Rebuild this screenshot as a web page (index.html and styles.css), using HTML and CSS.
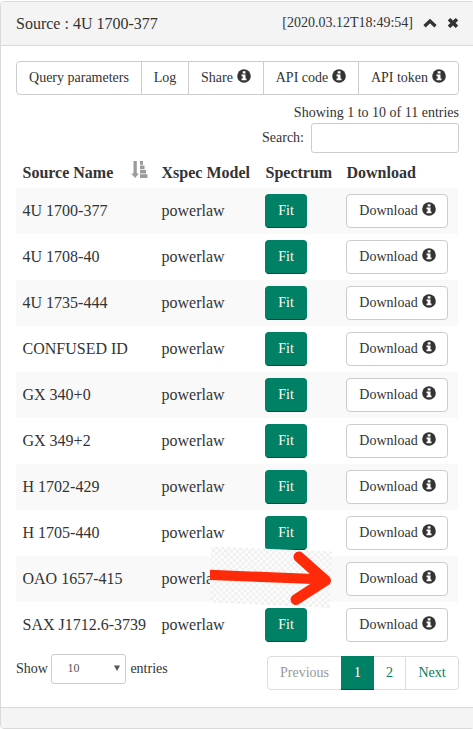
FILE: index.html
```
<!DOCTYPE html>
<html lang="en">
<head>
<meta charset="utf-8">
<title>Source : 4U 1700-377</title>
<link rel="stylesheet" href="styles.css">
</head>
<body>
<svg width="0" height="0" class="defs">
  <symbol id="info" viewBox="0 0 14 14"><circle cx="7" cy="7" r="6.8" fill="#333"/><path d="M5.700 2.200h2.800v2.200H5.700zM4.500 5.600h4v4h1v1.700H4.500V9.600h1.200V7.200H4.500z" fill="#fff"/></symbol>
</svg>
<section class="panel">
  <header class="panel-head">
    <span class="title">Source : 4U 1700-377</span>
    <span class="stamp">[2020.03.12T18:49:54]</span>
    <svg class="chev" width="14" height="10" viewBox="0 0 14 10"><path d="M1.500 8.200 7 3l5.500 5.200" fill="none" stroke="#333" stroke-width="3.300"/></svg>
    <svg class="close" width="11" height="10" viewBox="0 0 11 10"><path d="M1 1.200l8 7.600M9 1.200l-8 7.600" stroke="#333" stroke-width="3.500"/></svg>
  </header>
  <div class="panel-body">
    <div class="group">
      <button class="btn w-query">Query parameters</button>
      <button class="btn w-log">Log</button>
      <button class="btn w-share">Share <svg class="info"><use href="#info"/></svg></button>
      <button class="btn w-code">API code <svg class="info"><use href="#info"/></svg></button>
      <button class="btn w-token">API token <svg class="info"><use href="#info"/></svg></button>
    </div>
    <div class="showing">Showing 1 to 10 of 11 entries</div>
    <label class="search">Search:<input type="text"></label>
    <table>
      <colgroup><col class="c1"><col class="c2"><col class="c3"><col class="c4"></colgroup>
      <thead>
        <tr>
          <th><div class="sorted">Source Name
            <svg width="17" height="17" viewBox="0 0 17 17"><path d="M2.500 0h3.300v12.500h2.200L4.100 17 .2 12.500h2.300zM9 0h3v3.800H9zM9 4.500h4.500v3.800H9zM9 9h6v3.500H9zM9 13.200h7.500V17H9z" fill="#9b9b9b"/></svg></div></th>
          <th>Xspec Model</th><th>Spectrum</th><th>Download</th>
        </tr>
      </thead>
      <tbody>
        <tr><td>4U 1700-377</td><td>powerlaw</td><td><button class="btn fit">Fit</button></td><td><button class="btn dl">Download <svg class="info"><use href="#info"/></svg></button></td></tr>
        <tr><td>4U 1708-40</td><td>powerlaw</td><td><button class="btn fit">Fit</button></td><td><button class="btn dl">Download <svg class="info"><use href="#info"/></svg></button></td></tr>
        <tr><td>4U 1735-444</td><td>powerlaw</td><td><button class="btn fit">Fit</button></td><td><button class="btn dl">Download <svg class="info"><use href="#info"/></svg></button></td></tr>
        <tr><td>CONFUSED ID</td><td>powerlaw</td><td><button class="btn fit">Fit</button></td><td><button class="btn dl">Download <svg class="info"><use href="#info"/></svg></button></td></tr>
        <tr><td>GX 340+0</td><td>powerlaw</td><td><button class="btn fit">Fit</button></td><td><button class="btn dl">Download <svg class="info"><use href="#info"/></svg></button></td></tr>
        <tr><td>GX 349+2</td><td>powerlaw</td><td><button class="btn fit">Fit</button></td><td><button class="btn dl">Download <svg class="info"><use href="#info"/></svg></button></td></tr>
        <tr><td>H 1702-429</td><td>powerlaw</td><td><button class="btn fit">Fit</button></td><td><button class="btn dl">Download <svg class="info"><use href="#info"/></svg></button></td></tr>
        <tr><td>H 1705-440</td><td>powerlaw</td><td><button class="btn fit">Fit</button></td><td><button class="btn dl">Download <svg class="info"><use href="#info"/></svg></button></td></tr>
        <tr class="marked"><td>OAO 1657-415</td><td>powerlaw
          <svg class="arrow" width="126" height="66" viewBox="208 544 126 66">
            <defs><pattern id="checks" width="6" height="6" patternUnits="userSpaceOnUse" patternTransform="rotate(2.300)"><path d="M0 0h6v6H0z" fill="#fdfdfd"/><path d="M0 0h3v3H0zM3 3h3v3H3z" fill="#f0f0f0"/></pattern></defs>
            <path d="M211 546.500 332 551.500 330 608 209.500 602.500z" fill="url(#checks)"/>
            <path d="M210 569.800 320 574.300 320 584.300 210 580z" fill="#ff2a0a"/>
            <path d="M299 557 325.500 580.500 296 599.500" fill="none" stroke="#ff2a0a" stroke-width="11" stroke-linecap="round" stroke-linejoin="round"/>
          </svg></td><td></td><td><button class="btn dl">Download <svg class="info"><use href="#info"/></svg></button></td></tr>
        <tr><td>SAX J1712.6-3739</td><td>powerlaw</td><td><button class="btn fit">Fit</button></td><td><button class="btn dl">Download <svg class="info"><use href="#info"/></svg></button></td></tr>
      </tbody>
    </table>
    <div class="bottom">
      <div class="length">Show <span class="select">10<svg width="6" height="6" viewBox="0 0 6 6"><path d="M0 .5h6L3 6z" fill="#555"/></svg></span> <span class="unit">entries</span></div>
      <nav class="pages"><a class="prev">Previous</a><a class="active">1</a><a class="two">2</a><a class="next">Next</a></nav>
    </div>
  </div>
  <footer class="panel-foot"></footer>
</section>
</body>
</html>
```
FILE: styles.css
```
* { box-sizing: border-box; }
html, body { margin: 0; height: 729px; overflow: hidden; background: #fff; }
body { font: 14px/20px "Liberation Serif", serif; color: #333; padding-top: 1px; }
.defs { position: absolute; }
.panel { width: 475px; height: 728px; border: 1px solid #d9d9d9; border-radius: 4px; display: flex; flex-direction: column; }
.panel-head { height: 44px; flex: none; display: flex; align-items: center; background: #f4f4f4; border-bottom: 1px solid #d9d9d9; padding: 0 15px 0 15px; border-radius: 3px 3px 0 0; }
.title { font-size: 16px; flex: 1; padding-top: 1px; }
.stamp { margin-top: -2px; }
.chev { margin: -2px 1px 0 10px; }
.close { margin: -2px 0 0 10px; }
.panel-body { flex: 1; width: 458px; padding: 15px 0 0 15px; }
.btn { font: inherit; color: #333; height: 34px; padding: 0; background: #fff; border: 1px solid #ccc; border-radius: 4px; white-space: nowrap; display: inline-flex; align-items: center; justify-content: center; gap: 4px; }
.info { width: 14px; height: 14px; flex: none; margin-top: -4px; }
.group { display: flex; }
.group .btn { border-radius: 0; margin-right: -1px; flex: none; }
.group .btn:first-child { border-radius: 4px 0 0 4px; }
.group .btn:last-child { border-radius: 0 4px 4px 0; margin-right: 0; }
.w-query { width: 126px; }
.w-log { width: 48px; }
.w-share { width: 76px; }
.w-code { width: 96px; }
.w-token { width: 101px; }
.showing { text-align: right; margin-top: 8px; }
.search { display: flex; justify-content: flex-end; align-items: center; gap: 7px; height: 30px; }
.search input { width: 148px; height: 30px; border: 1px solid #ccc; border-radius: 3px; padding: 0; }
table { width: 442px; table-layout: fixed; border-collapse: collapse; font-size: 16px; line-height: 22px; margin-top: 5px; }
.c1 { width: 139px; }
.c2 { width: 104px; }
.c3 { width: 81px; }
.c4 { width: 118px; }
th { height: 30px; padding: 0 0 0 6.500px; text-align: left; vertical-align: middle; white-space: nowrap; }
.sorted { display: flex; justify-content: space-between; }
.sorted svg { margin: -1px 7px 0 0; }
td { height: 46px; padding: 0 0 0 6.500px; vertical-align: middle; white-space: nowrap; }
td .btn { font-size: 14px; line-height: 20px; vertical-align: middle; }
tbody tr:nth-child(odd) { background: #f9f9f9; }
td:nth-child(n+3) { padding-left: 6px; }
.fit { width: 42px; background: #008064; border-color: #008064; border-bottom-color: #004d3c; color: #fff; }
.dl { width: 102px; padding-left: 1px; }
.marked td { position: relative; }
.arrow { position: absolute; left: 53px; top: -12px; z-index: 2; }
.bottom { display: flex; justify-content: space-between; margin-top: 6px; }
.length { display: flex; align-items: center; height: 30px; gap: 3.500px; }
.unit { margin-left: .5px; }
.select { width: 75px; height: 30px; border: 1px solid #ccc; border-radius: 3px; font-size: 12px; color: #555; display: flex; align-items: center; justify-content: space-between; padding: 0 5px 2px 15px; }
.pages { display: flex; margin-top: 2px; }
.pages a { height: 34px; border: 1px solid #ddd; margin-left: -1px; display: flex; align-items: center; justify-content: center; color: #008064; }
.pages .prev { width: 75px; color: #999; border-radius: 4px 0 0 4px; }
.pages .active { width: 33px; background: #008064; border-color: #008064; border-bottom-color: #004d3c; color: #fff; z-index: 1; }
.pages .two { width: 33px; }
.pages .next { width: 54px; border-radius: 0 4px 4px 0; }
.panel-foot { height: 21px; flex: none; background: #f4f4f4; border-top: 1px solid #d9d9d9; border-radius: 0 0 3px 3px; }
```
